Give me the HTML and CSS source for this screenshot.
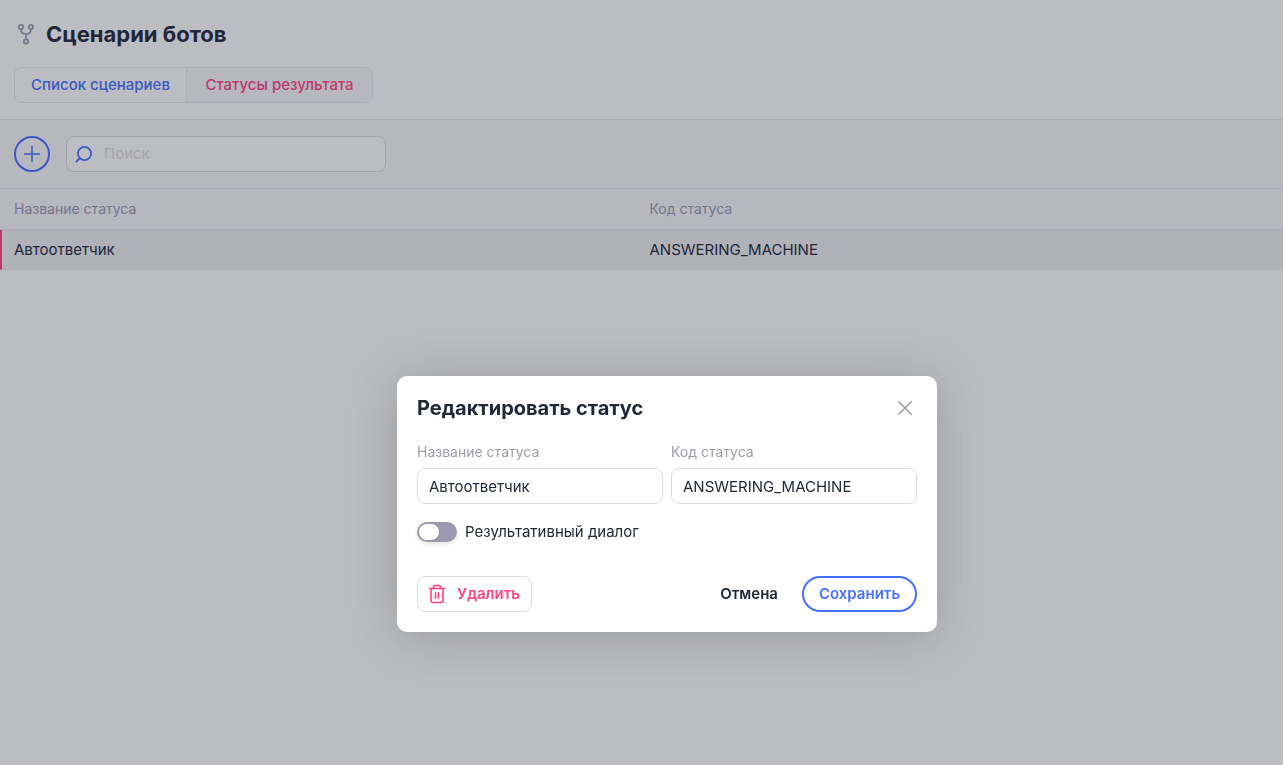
FILE: index.html
```html
<!DOCTYPE html>
<html lang="ru">
<head>
<meta charset="utf-8">
<meta name="viewport" content="width=device-width, initial-scale=1">
<title>Сценарии ботов</title>
<link rel="stylesheet" href="styles.css">
</head>
<body>
<header class="header">
  <div class="heading">
    <svg class="heading-icon" width="24" height="24" viewBox="0 0 24 24" aria-hidden="true"><circle cx="7" cy="5" r="2.2"/><circle cx="17" cy="5" r="2.2"/><circle cx="12" cy="19.500" r="2.200"/><path d="M7 7.200c0 3 2 4.800 5 4.800s5-1.800 5-4.800M12 12v5.300"/></svg>
    <h1 class="title">Сценарии ботов</h1>
  </div>
  <nav class="tabs">
    <a class="tab" href="#list">Список сценариев</a>
    <a class="tab tab-active" href="#statuses" aria-current="page">Статусы результата</a>
  </nav>
</header>
<main>
  <div class="toolbar">
    <button class="add" type="button" aria-label="Добавить"><svg width="18" height="18" viewBox="0 0 18 18" aria-hidden="true"><path d="M9 1.500v15M1.500 9h15"/></svg></button>
    <label class="search">
      <svg width="18" height="18" viewBox="0 0 18 18" aria-hidden="true"><circle cx="9.500" cy="8.500" r="6.600"/><path d="M4.800 13.200L1.500 16.500"/></svg>
      <input class="search-input" type="search" placeholder="Поиск" aria-label="Поиск">
    </label>
  </div>
  <table class="table">
    <thead><tr><th>Название статуса</th><th>Код статуса</th></tr></thead>
    <tbody><tr class="selected"><td>Автоответчик</td><td>ANSWERING_MACHINE</td></tr></tbody>
  </table>
</main>
<div class="overlay">
  <form class="modal" role="dialog" aria-modal="true" aria-labelledby="modal-title">
    <div class="modal-head">
      <h2 class="modal-title" id="modal-title">Редактировать статус</h2>
      <button class="close" type="button" aria-label="Закрыть"><svg width="24" height="24" viewBox="0 0 24 24" aria-hidden="true"><path d="M5.700 5.700l12.600 12.600M18.300 5.700L5.700 18.300"/></svg></button>
    </div>
    <div class="fields">
      <div class="field"><label for="name">Название статуса</label><input class="input" id="name" type="text" value="Автоответчик"></div>
      <div class="field"><label for="code">Код статуса</label><input class="input" id="code" type="text" value="ANSWERING_MACHINE"></div>
    </div>
    <label class="switch-row"><input class="switch" type="checkbox" role="switch">Результативный диалог</label>
    <div class="actions">
      <button class="button delete" type="button"><svg width="20" height="20" viewBox="0 0 20 20" aria-hidden="true"><path d="M2.500 4.500h15M6.500 4.500V3.200Q6.500 1.500 8.200 1.500h3.600q1.700 0 1.700 1.700v1.300M4 5v11.500q0 2 2 2h8q2 0 2-2V5M8.500 8.700v5.600M11.500 8.700v5.600"/></svg>Удалить</button>
      <button class="button cancel" type="button">Отмена</button>
      <button class="button save" type="submit">Сохранить</button>
    </div>
  </form>
</div>
</body>
</html>
```
FILE: styles.css
```css
*, *::before, *::after { box-sizing: border-box; }

body {
  margin: 0;
  min-height: 100vh;
  background: #fff;
  color: #22283a;
  font: 15px/20px Inter, "Noto Sans", sans-serif;
}

button, input { font: inherit; color: inherit; }
button { cursor: pointer; }
svg { fill: none; stroke: currentColor; stroke-linecap: round; stroke-linejoin: round; flex: none; }

.header { padding: 20px 14px 16px; border-bottom: 1px solid #ebebf0; }
.heading { display: flex; align-items: center; gap: 8px; height: 28px; }
.heading-icon { color: #9d99b0; stroke-width: 1.7px; }
.title { margin: 0; font-size: 22px; line-height: 28px; font-weight: 700; }

.tabs {
  display: inline-flex;
  margin-top: 19px;
  height: 36px;
  border: 1px solid #e7e7ef;
  border-radius: 8px;
  overflow: hidden;
  vertical-align: top;
}
.tab { display: flex; align-items: center; justify-content: center; min-width: 171px; padding: 0 15px; font-weight: 500; color: #4770ff; text-decoration: none; }
.tab-active { min-width: 186px; background: #f6f6fb; color: #ff4282; border-left: 1px solid #e7e7ef; }

.toolbar { display: flex; gap: 16px; padding: 16px 14px; background: #f6f6fb; border-bottom: 1px solid #e7e7ef; }
.add {
  display: grid;
  place-items: center;
  flex: none;
  width: 36px;
  height: 36px;
  padding: 0;
  border: 2px solid #4770ff;
  border-radius: 50%;
  background: transparent;
  color: #4770ff;
  stroke-width: 1.5px;
}
.search {
  display: flex;
  align-items: center;
  gap: 11px;
  width: 320px;
  height: 36px;
  padding: 0 8px;
  border: 1px solid #dcdae6;
  border-radius: 8px;
  background: #fff;
  color: #4770ff;
  stroke-width: 1.8px;
}
.search-input { flex: 1; min-width: 0; padding: 0; border: 0; outline: 0; background: none; color: #22283a; }
.search-input::placeholder { color: #dcdae6; opacity: 1; }

.table { width: 100%; table-layout: fixed; border-collapse: separate; border-spacing: 0; }
.table th, .table td { padding: 10px 8px; border-bottom: 1px solid #e7e7ef; text-align: left; font-weight: 400; }
.table th { height: 41px; background: #f6f6fb; color: #9d99b0; font-size: 14px; }
.table td { height: 40px; background: #eeeef3; padding-block: 9px; }
.table th:first-child, .table td:first-child { padding-left: 14px; }
.table .selected td:first-child { border-left: 2px solid #ff4282; padding-left: 12px; }

.overlay {
  position: fixed;
  inset: 0;
  display: flex;
  align-items: center;
  justify-content: center;
  padding: 243px 0 0 51px;
  background: rgba(34, 38, 52, .3);
}
.modal {
  width: 540px;
  padding: 20px;
  border-radius: 10px;
  background: #fff;
  box-shadow: 0 4px 48px rgba(34, 38, 52, .24);
}
.modal-head { display: flex; align-items: center; justify-content: space-between; height: 24px; }
.modal-title { margin: 0; font-size: 20px; line-height: 24px; font-weight: 700; }
.close { display: flex; padding: 0; border: 0; background: none; color: #9d99b0; stroke-width: 1.5px; }
.fields { display: grid; grid-template-columns: 1fr 1fr; gap: 8px; margin-top: 22px; }
.field { display: flex; flex-direction: column; gap: 6px; min-width: 0; }
.field label { color: #9d99b0; font-size: 14px; line-height: 20px; }
.input { width: 100%; height: 36px; padding: 0 11px; border: 1px solid #dcdae6; border-radius: 8px; background: #fff; }
.switch-row { display: flex; align-items: center; gap: 8px; margin-top: 18px; }
.switch { appearance: none; width: 40px; height: 20px; margin: 0; padding: 2px; border-radius: 10px; background: #9d99b0; box-shadow: 0 2px 4px rgba(34, 38, 52, .12); }
.switch::before { content: ""; display: block; width: 20px; height: 16px; border-radius: 8px; background: #fff; }
.switch:checked { background: #4770ff; }
.switch:checked::before { margin-left: auto; }

.actions { display: flex; gap: 8px; margin-top: 34px; }
.button { display: flex; align-items: center; justify-content: center; height: 36px; padding: 0 16px; border: 0; background: none; font-weight: 600; }
.delete { min-width: 115px; margin-right: auto; gap: 10px; padding: 0 10px 0 8px; border: 1px solid #dcdae6; border-radius: 8px; color: #ff4282; stroke-width: 1.6px; }
.save { min-width: 115px; padding: 0 14px; border: 2px solid #4770ff; border-radius: 18px; color: #4770ff; }
```
